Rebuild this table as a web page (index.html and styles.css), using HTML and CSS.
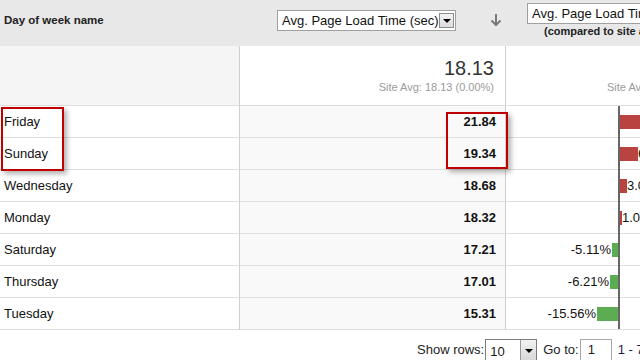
FILE: index.html
```html
<!DOCTYPE html>
<html>
<head>
<meta charset="utf-8">
<link rel="stylesheet" href="styles.css">
</head>
<body>
<div class="report">
  <div class="row head">
    <div class="cell h-dim">Day of week name</div>
    <div class="cell h-metric">
      <div class="sel sel1">Avg. Page Load Time (sec)<span class="dd"><span class="tri"></span></span></div>
      <svg class="sort" width="12" height="14" viewBox="0 0 12 14"><path d="M6 1V12M1.5 7.5L6 12L10.5 7.5" fill="none" stroke="#7a7a7a" stroke-width="2"/></svg>
    </div>
    <div class="cell h-cmp">
      <div class="sel sel2">Avg. Page Load Time (sec)<span class="dd"><span class="tri"></span></span></div>
      <div class="cmp-note">(compared to site average)</div>
    </div>
  </div>
  <div class="row summary">
    <div class="cell s1"></div>
    <div class="cell s2">
      <div class="big">18.13</div>
      <div class="avg">Site Avg: 18.13 (0.00%)</div>
    </div>
    <div class="cell s3"><div class="avg">Site Avg: 18.13 (0.00%)</div></div>
  </div>
  <div class="rows">
    <div class="row data">
      <div class="cell c1">Friday</div>
      <div class="cell c2">21.84</div>
      <div class="cell c3"><div class="neg"></div><div class="pos"><span class="bar red" style="width:47px"></span><span class="pct">20.46%</span></div></div>
    </div>
    <div class="row data">
      <div class="cell c1">Sunday</div>
      <div class="cell c2">19.34</div>
      <div class="cell c3"><div class="neg"></div><div class="pos"><span class="bar red" style="width:18px"></span><span class="pct">6.67%</span></div></div>
    </div>
    <div class="row data">
      <div class="cell c1">Wednesday</div>
      <div class="cell c2">18.68</div>
      <div class="cell c3"><div class="neg"></div><div class="pos"><span class="bar red" style="width:7px"></span><span class="pct">3.03%</span></div></div>
    </div>
    <div class="row data">
      <div class="cell c1">Monday</div>
      <div class="cell c2">18.32</div>
      <div class="cell c3"><div class="neg"></div><div class="pos"><span class="bar red" style="width:2px"></span><span class="pct">1.05%</span></div></div>
    </div>
    <div class="row data">
      <div class="cell c1">Saturday</div>
      <div class="cell c2">17.21</div>
      <div class="cell c3"><div class="neg"><span class="pct">-5.11%</span><span class="bar green" style="width:8px"></span></div><div class="pos"></div></div>
    </div>
    <div class="row data">
      <div class="cell c1">Thursday</div>
      <div class="cell c2">17.01</div>
      <div class="cell c3"><div class="neg"><span class="pct">-6.21%</span><span class="bar green" style="width:10px"></span></div><div class="pos"></div></div>
    </div>
    <div class="row data">
      <div class="cell c1">Tuesday</div>
      <div class="cell c2">15.31</div>
      <div class="cell c3"><div class="neg"><span class="pct">-15.56%</span><span class="bar green" style="width:23px"></span></div><div class="pos"></div></div>
    </div>
    <div class="axis"></div>
  </div>
  <div class="pager">
    <span class="plabel">Show rows:</span>
    <div class="psel"><span class="pval">10</span><span class="pdd"><span class="tri"></span></span></div>
    <span class="plabel goto">Go to:</span>
    <div class="pinput">1</div>
    <span class="plabel range">1 - 7 of 7</span>
  </div>
</div>
<div class="hl hl-left"></div>
<div class="hl hl-right"></div>
</body>
</html>
```

FILE: styles.css
```css
html, body {
  margin: 0;
  padding: 0;
}
body {
  width: 640px;
  height: 360px;
  overflow: hidden;
  position: relative;
  background: #fff;
  color: #1a1a1a;
  font-family: "Liberation Sans", Arial, sans-serif;
}
.report {
  width: 760px;
}
.row {
  display: grid;
  grid-template-columns: 240px 266px 254px;
}
.cell {
  box-sizing: border-box;
  min-width: 0;
}

/* header */
.head {
  height: 46px;
  background: #e8e8e8;
}
.h-dim {
  font-weight: bold;
  font-size: 11.5px;
  line-height: 14px;
  padding: 13px 0 0 4px;
  color: #222;
}
.h-metric {
  display: flex;
  align-items: flex-start;
  padding: 10px 0 0 37px;
}
.sel {
  display: flex;
  align-items: center;
  box-sizing: border-box;
  height: 21px;
  border: 1px solid #a0a0a0;
  background: #fff;
  font-size: 13px;
  padding-left: 4px;
  white-space: nowrap;
  color: #111;
}
.sel1 {
  width: 179px;
}
.dd {
  margin-left: auto;
  margin-right: 1px;
  width: 15px;
  height: 15px;
  box-sizing: border-box;
  border: 1px solid #8c8c8c;
  background: linear-gradient(#f4f4f4, #dcdcdc);
  display: flex;
  align-items: center;
  justify-content: center;
}
.tri {
  width: 0;
  height: 0;
  border-left: 4px solid transparent;
  border-right: 4px solid transparent;
  border-top: 4px solid #000;
}
.sort {
  margin: 3px 0 0 34px;
}
.h-cmp {
  padding: 3px 0 0 21px;
}
.sel2 {
  width: 200px;
}
.cmp-note {
  font-size: 11px;
  font-weight: bold;
  line-height: 13px;
  margin-top: 1px;
  padding-left: 17px;
  white-space: nowrap;
  color: #222;
}

/* summary */
.summary {
  height: 60px;
}
.summary .cell {
  border-bottom: 1px solid #dedede;
}
.s1 {
  background: #f5f5f5;
  border-right: 1px solid #cfcfcf;
}
.s2 {
  border-right: 1px solid #cfcfcf;
  display: flex;
  flex-direction: column;
  align-items: flex-end;
  padding: 11px 11px 0 0;
}
.big {
  font-size: 20px;
  line-height: 22px;
  color: #333;
}
.avg {
  font-size: 11px;
  line-height: 13px;
  color: #9a9a9a;
  white-space: nowrap;
}
.s2 .avg {
  margin-top: 2px;
}
.s3 {
  padding: 35px 0 0 101px;
}

/* data rows */
.rows {
  position: relative;
}
.data {
  height: 32px;
}
.data .cell {
  border-bottom: 1px solid #dedede;
  display: flex;
  align-items: center;
  font-size: 13px;
}
.c1 {
  border-right: 1px solid #cfcfcf;
  padding-left: 4px;
  color: #111;
}
.c2 {
  border-right: 1px solid #cfcfcf;
  background: #f9f9f9;
  justify-content: flex-end;
  padding-right: 9px;
  font-weight: bold;
  color: #111;
}
.c3 {
  white-space: nowrap;
}
.neg {
  width: 114px;
  flex: none;
  display: flex;
  align-items: center;
  justify-content: flex-end;
}
.pos {
  display: flex;
  align-items: center;
}
.bar {
  display: block;
  height: 14px;
  flex: none;
}
.red {
  background: #b9443f;
}
.green {
  background: #5cad52;
}
.pct {
  color: #111;
}
.neg .pct {
  margin-right: 1px;
}
.axis {
  position: absolute;
  left: 618px;
  top: 0;
  bottom: 1px;
  width: 2px;
  background: #666;
}

/* pager */
.pager {
  display: flex;
  align-items: flex-start;
  padding: 9px 0 0 417px;
  font-size: 13px;
  white-space: nowrap;
}
.plabel {
  line-height: 22px;
  color: #222;
}
.psel {
  margin-left: 1px;
  width: 52px;
  height: 24px;
  box-sizing: border-box;
  border: 1px solid #7d7d7d;
  display: flex;
  background: #fff;
}
.pval {
  padding: 4px 0 0 4px;
  flex: 1;
}
.pdd {
  width: 16px;
  border-left: 1px solid #9a9a9a;
  background: linear-gradient(#f2f2f2, #d6d6d6);
  display: flex;
  justify-content: center;
  padding-top: 9px;
  box-sizing: border-box;
}
.goto {
  margin-left: 6px;
}
.pinput {
  margin-left: 1px;
  width: 32px;
  height: 24px;
  box-sizing: border-box;
  border: 1px solid #a8a8a8;
  padding: 2px 0 0 7px;
  background: #fff;
}
.range {
  margin-left: 6px;
  color: #1c1c4a;
}

/* highlight boxes */
.hl {
  position: absolute;
  box-sizing: border-box;
  border: 2px solid #c00000;
  box-shadow: 3px 3px 5px rgba(0, 0, 0, 0.3);
}
.hl-left {
  left: 1px;
  top: 107px;
  width: 63px;
  height: 64px;
}
.hl-right {
  left: 446px;
  top: 112px;
  width: 62px;
  height: 57px;
}
```
